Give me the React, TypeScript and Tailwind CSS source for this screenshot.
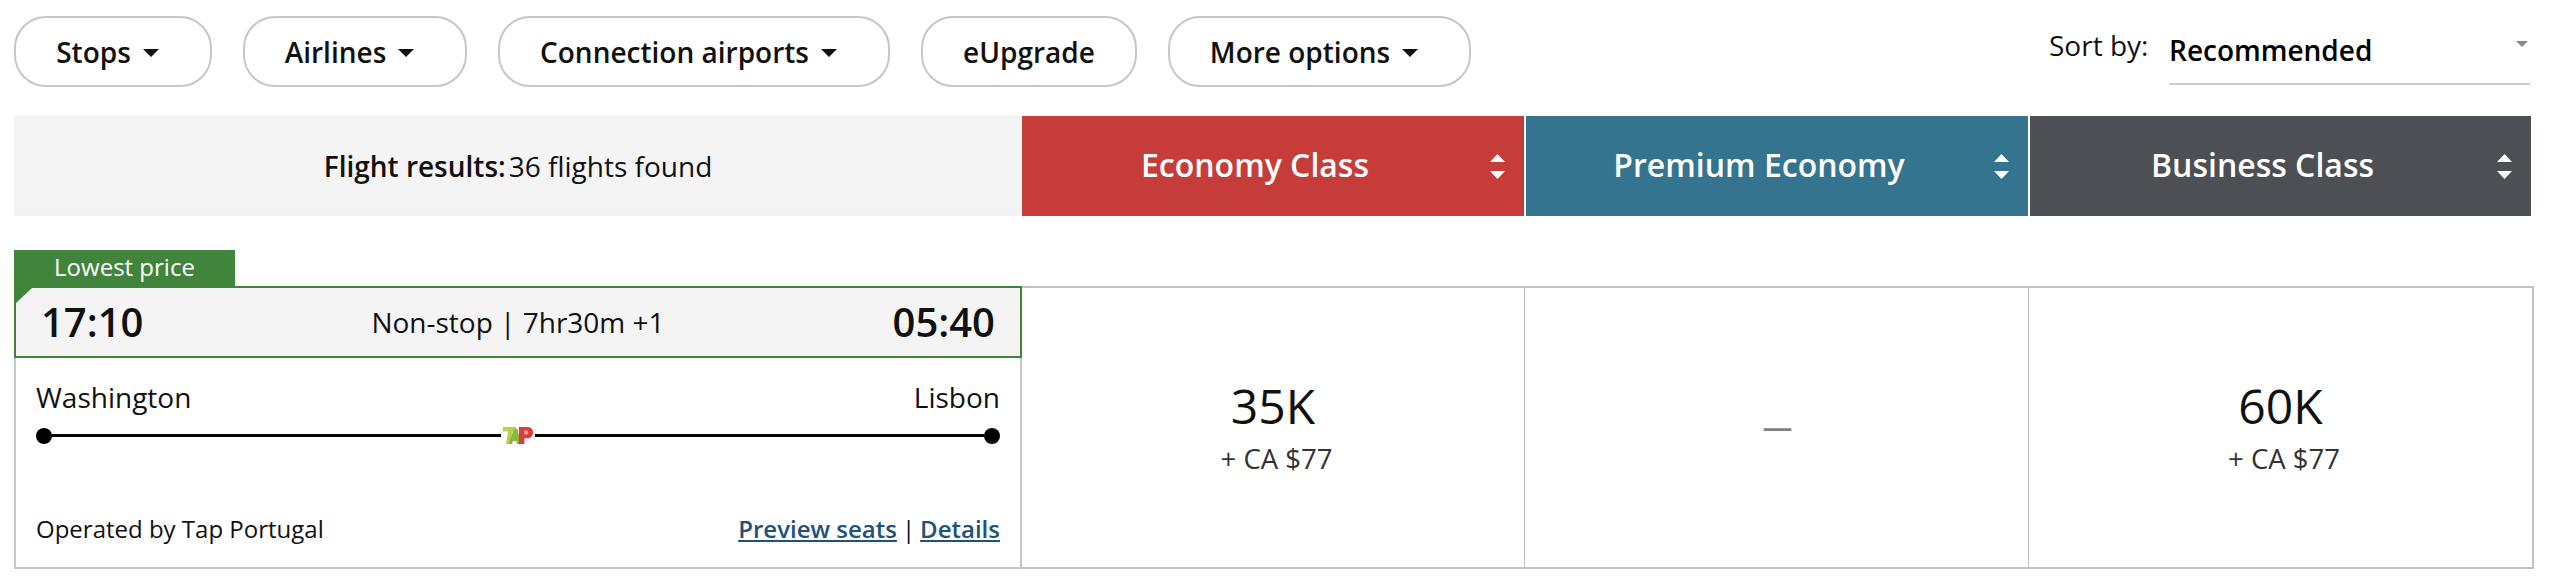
import React from "react";

function Caret({ className }: { className: string }) {
  return (
    <svg viewBox="0 0 16 8" className={className} aria-hidden="true">
      <path d="M0 0h16L8 8z" fill="currentColor" />
    </svg>
  );
}

function Pill({ label, caret = true, width }: { label: string; caret?: boolean; width: string }) {
  return (
    <button className={`flex h-[71px] items-center justify-center gap-[12px] rounded-[32px] border-2 border-[#c3c7cb] bg-white pt-[1px] text-[28px] font-semibold text-[#111] ${caret ? "pr-[11px]" : ""} ${width}`}>
      <span>{label}</span>
      {caret && <Caret className="mt-[1px] h-[8px] w-[16px] text-[#111]" />}
    </button>
  );
}

function SortArrows() {
  return (
    <svg viewBox="0 0 15 25" className="absolute right-[19px] top-[38px] h-[25px] w-[15px]" aria-hidden="true">
      <path d="M7.5 0L15 8H0z" fill="#fff" />
      <path d="M0 17h15L7.5 25z" fill="#fff" />
    </svg>
  );
}

function ClassHead({ label, width, bg }: { label: string; width: string; bg: string }) {
  return (
    <div className={`relative flex h-full items-center justify-center pb-[2px] pr-[36px] text-[32px] font-semibold text-white ${width} ${bg}`}>
      <span>{label}</span>
      <SortArrows />
    </div>
  );
}

function TapLogo() {
  return (
    <svg viewBox="0 0 30 17" className="mx-[2px] h-[17px] w-[30px]" aria-label="TAP">
      <path d="M0 0h13v4.5H9.5L7.5 17H3L5 4.5H0z" fill="#b9d24a" />
      <path d="M11 2h3.5L18 17h-4l-.5-3H10l-1 3H5.5z" fill="#86bb3f" />
      <path d="M16 0h8.6C28 0 30 2.4 30 5.4c0 3.6-2.4 5.8-5.8 5.8H21.4V17H16z" fill="#e0393e" />
      <path d="M21.2 3.6v4h2.2c1.2 0 1.9-.8 1.9-2s-.7-2-1.9-2z" fill="#f4a5a5" />
    </svg>
  );
}

function Fare({ width, points, extra }: { width: string; points: string; extra: string }) {
  return (
    <div className={`flex h-[283px] flex-col items-center justify-center border-y-2 border-r border-[#bfc3c7] pb-[1px] ${width}`}>
      <span className="mb-[4px] text-[48px] leading-[62px] text-[#111]">{points}</span>
      <span className="mb-[2px] ml-[7px] text-[27.5px] leading-[36px] text-[#333]">{extra}</span>
    </div>
  );
}

export default function App() {
  return (
    <div className="h-[582px] w-[2554px] overflow-hidden bg-white pl-[14px] pt-[16px] font-['Open_Sans',sans-serif] text-[#111]">
      <div className="flex h-[71px] w-[2516px] items-start">
        <div className="flex gap-[31px]">
          <Pill label="Stops" width="w-[198px]" />
          <Pill label="Airlines" width="w-[224px]" />
          <Pill label="Connection airports" width="w-[392px]" />
          <Pill label="eUpgrade" caret={false} width="w-[216px]" />
          <Pill label="More options" width="w-[303px]" />
        </div>
        <div className="ml-auto flex items-start">
          <span className="mt-[9px] w-[120px] text-[28px] leading-[40px]">Sort by:</span>
          <div className="relative flex h-[69px] w-[361px] items-start border-b-2 border-[#cfcfcf]">
            <span className="mt-[14px] text-[28px] font-semibold leading-[40px] text-black">Recommended</span>
            <Caret className="absolute right-[1px] top-[25px] h-[6px] w-[14px] text-[#888]" />
          </div>
        </div>
      </div>

      <div className="mt-[29px] flex h-[100px] items-stretch">
        <div className="flex h-full w-[1008px] items-center justify-center gap-[3px] border-2 border-[#f1f1f1] border-r-[#f8f8f8] bg-[#f4f4f4] text-[28px]">
          <span className="font-semibold">Flight results:</span>
          <span>36 flights found</span>
        </div>
        <ClassHead label="Economy Class" width="mr-[2px] w-[502px]" bg="bg-[#c53c3a]" />
        <ClassHead label="Premium Economy" width="mr-[2px] w-[502px]" bg="bg-[#34748e]" />
        <ClassHead label="Business Class" width="w-[501px]" bg="bg-[#4c4f53]" />
      </div>

      <div className="mt-[34px] flex items-end">
        <div className="w-[1008px]">
          <div className="flex h-[36px] w-[221px] items-center justify-center bg-[#41843c] pb-[2px] text-[24px] text-white">
            Lowest price
          </div>
          <div className="relative flex h-[72px] items-center justify-between border-2 border-[#41843c] bg-[#f4f4f4] pl-[25px] pr-[25px]">
            <div className="absolute left-0 top-0 h-0 w-0 border-r-[16px] border-b-[15px] border-r-transparent border-b-transparent border-l-0 border-t-[15px] border-t-[#41843c]" />
            <span className="text-[40px] font-semibold leading-none">17:10</span>
            <span className="text-[28px]">Non-stop | 7hr30m +1</span>
            <span className="text-[40px] font-semibold leading-none">05:40</span>
          </div>
          <div className="flex h-[211px] flex-col border-x-2 border-b-2 border-[#c3c7cb] pl-[20px] pr-[20px]">
            <div className="mt-[19px] flex justify-between text-[28px] leading-[40px]">
              <span>Washington</span>
              <span>Lisbon</span>
            </div>
            <div className="mt-[10px] flex h-[17px] items-center">
              <span className="h-[16px] w-[16px] shrink-0 rounded-full bg-black" />
              <span className="h-[3px] flex-1 bg-black" />
              <TapLogo />
              <span className="h-[3px] flex-1 bg-black" />
              <span className="h-[16px] w-[16px] shrink-0 rounded-full bg-black" />
            </div>
            <div className="mt-[67px] flex items-center justify-between text-[24px] leading-[36px]">
              <span>Operated by Tap Portugal</span>
              <span>
                <a className="font-semibold text-[#20517b] underline">Preview seats</a>
                <span className="mx-[5px]">|</span>
                <a className="font-semibold text-[#20517b] underline">Details</a>
              </span>
            </div>
          </div>
        </div>
        <Fare width="w-[503px]" points="35K" extra="+ CA $77" />
        <div className="flex h-[283px] w-[504px] items-center justify-center border-y-2 border-r border-[#bfc3c7] pb-[3px] pl-[2px] text-[30px] font-semibold text-[#808080]">
          —
        </div>
        <div className="border-r border-[#bfc3c7]">
          <Fare width="w-[504px]" points="60K" extra="+ CA $77" />
        </div>
      </div>
    </div>
  );
}
